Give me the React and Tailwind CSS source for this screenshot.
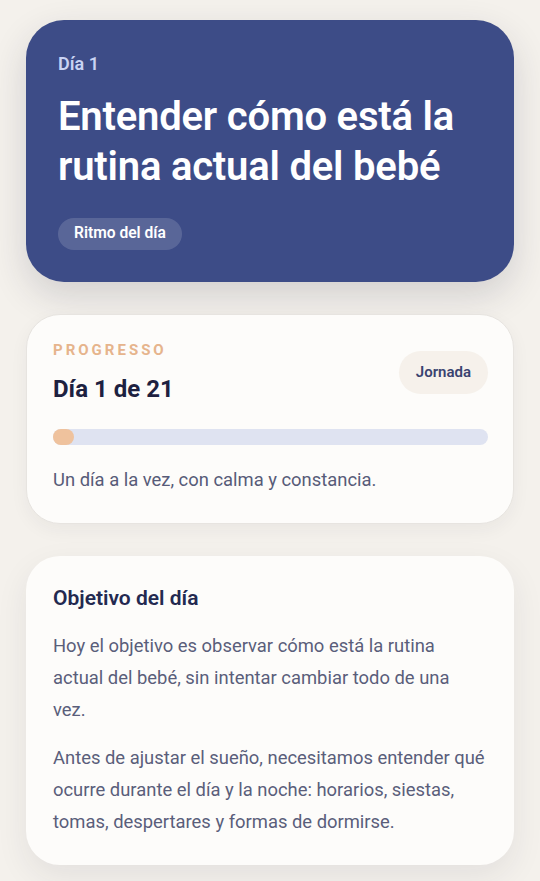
export default function App() {
  const total = 21
  const day = 1

  return (
    <div
      className="min-h-[881px] bg-[#f4f1ec] px-[26px] pt-5 pb-8 flex flex-col gap-8"
      style={{ fontFamily: 'Roboto, "Noto Sans", sans-serif' }}
    >
      {/* Cabecera del día */}
      <div className="rounded-[38px] bg-[#3d4c87] px-8 pt-8 pb-8 shadow-[0_14px_36px_rgba(40,40,60,0.16)]">
        <p className="text-[18px] leading-6 font-semibold text-[#c9d3f3]">Día 1</p>
        <h1 className="mt-4 text-[40px] leading-[50px] font-semibold text-white tracking-[-0.2px]">
          Entender cómo está la rutina actual del bebé
        </h1>
        <span className="mt-[26px] inline-flex h-[32px] items-center rounded-full bg-white/15 px-4 text-[15.6px] font-semibold text-white">
          Ritmo del día
        </span>
      </div>

      {/* Progreso */}
      <div className="rounded-[34px] border border-[#e7e4e0] bg-[#fdfcfa] pl-[26px] pr-[25px] pt-[25px] pb-[29px] shadow-[0_6px_18px_rgba(40,40,60,0.05)]">
        <div className="flex items-center justify-between">
          <div>
            <p className="text-[15px] leading-5 font-bold uppercase tracking-[0.2em] text-[#e6b48c]">
              Progresso
            </p>
            <p className="mt-[13px] text-[24px] leading-8 font-bold text-[#1d2140]">
              Día {day} de {total}
            </p>
          </div>
          <span className="inline-flex h-[43px] items-center rounded-full bg-[#f6f1eb] px-[17px] text-[15px] font-semibold text-[#3a4370]">
            Jornada
          </span>
        </div>
        <div className="mt-6 h-[16px] w-full rounded-full bg-[#dfe3f1]">
          <div
            className="h-full rounded-full bg-[#efc29d]"
            style={{ width: `${(day / total) * 100}%` }}
          />
        </div>
        <p className="mt-[21px] text-[18.4px] leading-[28px] text-[#575b78]">
          Un día a la vez, con calma y constancia.
        </p>
      </div>

      {/* Objetivo */}
      <div className="rounded-[34px] bg-[#fdfcfa] pl-[27px] pr-[29px] pt-7 pb-[27px] shadow-[0_12px_32px_rgba(40,40,60,0.08)]">
        <h2 className="text-[21px] leading-7 font-semibold text-[#232950]">Objetivo del día</h2>
        <p className="mt-[18px] text-[18.4px] leading-[32px] text-[#5a5e7a]">
          Hoy el objetivo es observar cómo está la rutina actual del bebé, sin intentar cambiar todo de una vez.
        </p>
        <p className="mt-[16px] text-[18.4px] leading-[32px] text-[#5a5e7a]">
          Antes de ajustar el sueño, necesitamos entender qué ocurre durante el día y la noche: horarios, siestas, tomas, despertares y formas de dormirse.
        </p>
      </div>
    </div>
  )
}
